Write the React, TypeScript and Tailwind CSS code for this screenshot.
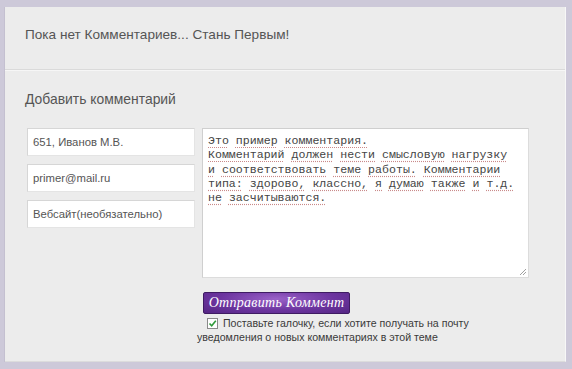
const comment = [
  "Это пример комментария.",
  "Комментарий должен нести смысловую нагрузку",
  "и соответствовать теме работы. Комментарии",
  "типа: здорово, классно, я думаю также и т.д.",
  "не засчитываются.",
];

function Line({ text }: { text: string }) {
  const words = text.split(" ");
  return (
    <div className="whitespace-nowrap">
      {words.map((w, i) => (
        <span key={i}>
          <span className="underline decoration-dotted decoration-[#c98a8a] underline-offset-[3px]">
            {w}
          </span>
          {i < words.length - 1 ? " " : ""}
        </span>
      ))}
    </div>
  );
}

export default function App() {
  return (
    <div className="w-[572px] h-[369px] bg-[#cdc9d9] pt-[7px] pl-[5px] font-['Liberation_Sans',Arial,sans-serif]">
      <div className="w-[561px] h-[355px] bg-[#ececec] border-r border-r-[#f7f7f7] border-b border-b-[#dcdcdc] shadow-[-1px_0_0_#c4c0d0]">
        {/* Header */}
        <div className="h-[63px] pl-[20px] pt-[19px] border-b border-[#dadada] shadow-[0_1px_0_#f6f6f6]">
          <h2 className="text-[13.6px] leading-[18px] text-[#555]">
            Пока нет Комментариев... Стань Первым!
          </h2>
        </div>

        {/* Form */}
        <div className="pl-[20px] pt-[20px]">
          <h3 className="text-[13.9px] leading-[18px] text-[#555]">
            Добавить комментарий
          </h3>

          <div className="flex mt-[20px] ml-[2px] gap-[7px]">
            <div className="flex flex-col gap-[8px] w-[168px]">
              {["651, Иванов М.В.", "primer@mail.ru", "Вебсайт(необязательно)"].map((v) => (
                <div
                  key={v}
                  className="h-[28px] bg-white border border-[#e4e4e4] border-t-[#d6d6d6] border-l-[#d6d6d6] pl-[5px] flex items-center text-[11.3px] text-[#555]"
                >
                  {v}
                </div>
              ))}
            </div>

            <div className="flex flex-col">
              <div className="relative w-[327px] h-[150px] bg-white border border-[#dcdcdc] border-t-[#cfcfcf] border-l-[#cfcfcf] pl-[5px] pt-[5px] font-['Liberation_Mono','Courier_New',monospace] text-[11.6px] leading-[14.3px] text-[#444]">
                {comment.map((l) => (
                  <Line key={l} text={l} />
                ))}
                <svg className="absolute right-[1px] bottom-[1px]" width="9" height="9" viewBox="0 0 9 9">
                  <path d="M8 2 L2 8 M8 5 L5 8" stroke="#a0a0a0" strokeWidth="1" />
                </svg>
              </div>

              <button className="mt-[14px] ml-[1px] w-[147px] h-[22px] rounded-[2px] border border-[#3f1b63] bg-[radial-gradient(ellipse_at_50%_30%,#9a62c8_0%,#6d35a0_55%,#552684_100%)] text-white italic text-[14px] font-['Liberation_Serif','Times_New_Roman',serif] tracking-[0.3px] leading-none">
                Отправить Коммент
              </button>

              <div className="-ml-[5px] mt-[2px] text-[10.6px] leading-[14px] text-[#3a3a3a] w-[290px]">
                <span className="inline-flex items-center justify-center w-[11px] h-[11px] ml-[10px] mr-[5px] align-[-1px] bg-white border border-[#8a8a8a]">
                  <svg width="9" height="9" viewBox="0 0 9 9">
                    <path d="M1.5 4.5 L3.7 6.8 L7.8 1.8" stroke="#2f9a3a" strokeWidth="1.6" fill="none" />
                  </svg>
                </span>
                Поставьте галочку, если хотите получать на почту уведомления о новых комментариях в этой теме
              </div>
            </div>
          </div>
        </div>
      </div>
    </div>
  );
}
